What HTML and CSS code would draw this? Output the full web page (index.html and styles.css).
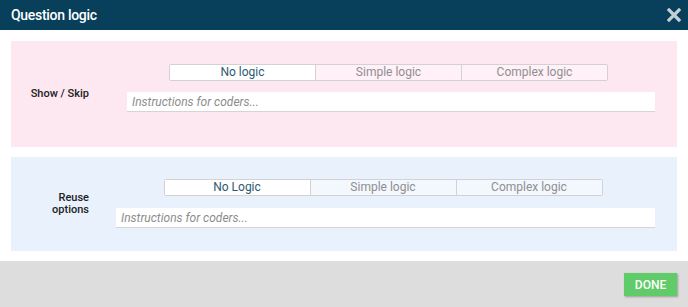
FILE: index.html
```html
<!DOCTYPE html>
<html lang="en">
<head>
  <meta charset="UTF-8" />
  <title>Question logic</title>
  <link rel="stylesheet" href="styles.css">
</head>
<body>
  <div class="dialog">
    <div class="dialog-header">
      <span class="dialog-title">Question logic</span>
      <svg class="close-icon" width="14" height="14" viewBox="0 0 14 14">
        <path d="M2 2 L12 12 M12 2 L2 12" stroke="#c5d0d6" stroke-width="3.2" stroke-linecap="square"/>
      </svg>
    </div>

    <div class="dialog-body">
      <div class="panel panel-pink">
        <div class="panel-label label-show">Show / Skip</div>
        <div class="panel-controls">
          <div class="segments">
            <div class="segment active">No logic</div>
            <div class="segment">Simple logic</div>
            <div class="segment">Complex logic</div>
          </div>
          <input class="instructions" type="text" placeholder="Instructions for coders...">
        </div>
      </div>

      <div class="panel panel-blue">
        <div class="panel-label label-reuse">Reuse<br>options</div>
        <div class="panel-controls">
          <div class="segments">
            <div class="segment active">No Logic</div>
            <div class="segment">Simple logic</div>
            <div class="segment">Complex logic</div>
          </div>
          <input class="instructions" type="text" placeholder="Instructions for coders...">
        </div>
      </div>
    </div>

    <div class="dialog-footer">
      <button class="done-btn">DONE</button>
    </div>
  </div>
</body>
</html>
```

FILE: styles.css
```css
body {
  margin: 0;
  font-family: Roboto, "Liberation Sans", sans-serif;
  background: #fff;
}

.dialog {
  height: 307px;
  display: flex;
  flex-direction: column;
}

.dialog-header {
  height: 30px;
  background: #083f5a;
  display: flex;
  align-items: center;
  justify-content: space-between;
  padding: 0 7px 0 11px;
}

.dialog-title {
  color: #fff;
  font-size: 14px;
  font-weight: 500;
  letter-spacing: -0.3px;
}

.dialog-body {
  display: flex;
  flex-direction: column;
  gap: 10px;
  padding: 11px 11px 10px;
}

.panel {
  display: flex;
  align-items: center;
}

.panel-pink {
  background: #fde8f1;
  padding: 23px 22px 35px 0;
}

.panel-blue {
  background: #e9f1fd;
  padding: 22px 22px 23px 0;
}

.panel-label {
  font-size: 11px;
  font-weight: 500;
  color: #222;
  text-align: right;
  box-sizing: border-box;
  line-height: 12px;
}

.label-show {
  width: 116px;
  padding-right: 38px;
  margin-top: 12px;
}

.label-reuse {
  width: 105px;
  padding-right: 27px;
}

.panel-controls {
  flex: 1;
  display: flex;
  flex-direction: column;
  align-items: center;
  gap: 11px;
}

.panel-blue .panel-controls {
  gap: 12px;
}

.segments {
  display: flex;
  width: 439px;
  height: 17px;
  box-sizing: border-box;
  border: 1px solid #d2d2d2;
  border-radius: 2px;
  margin-right: 5px;
}

.segment {
  flex: 1;
  font-size: 12px;
  line-height: 15px;
  text-align: center;
  color: #8f8f8f;
  border-left: 1px solid #d2d2d2;
}

.segment:first-child {
  border-left: none;
}

.panel-pink .segment {
  background: #fff1f7;
}

.panel-blue .segment {
  background: #f3f7fe;
}

.panel .segment.active {
  background: #fff;
  color: #2d5a71;
}

.instructions {
  width: 100%;
  height: 20px;
  box-sizing: border-box;
  border: none;
  border-bottom: 1px solid #d4d4d4;
  background: #fff;
  padding: 0 5px;
  font-family: Roboto, "Liberation Sans", sans-serif;
  font-size: 12px;
  font-style: italic;
  outline: none;
}

.instructions::placeholder {
  color: #8c8c8c;
}

.dialog-footer {
  flex: 1;
  background: #dddddd;
  display: flex;
  justify-content: flex-end;
  align-items: flex-start;
  padding: 12px 11px 0;
}

.done-btn {
  width: 53px;
  height: 23px;
  background: #5fcb69;
  border: none;
  color: #fff;
  font-family: Roboto, "Liberation Sans", sans-serif;
  font-size: 12px;
  font-weight: 500;
  box-shadow: 1px 1px 2px rgba(0, 0, 0, 0.3);
  cursor: pointer;
}
```
